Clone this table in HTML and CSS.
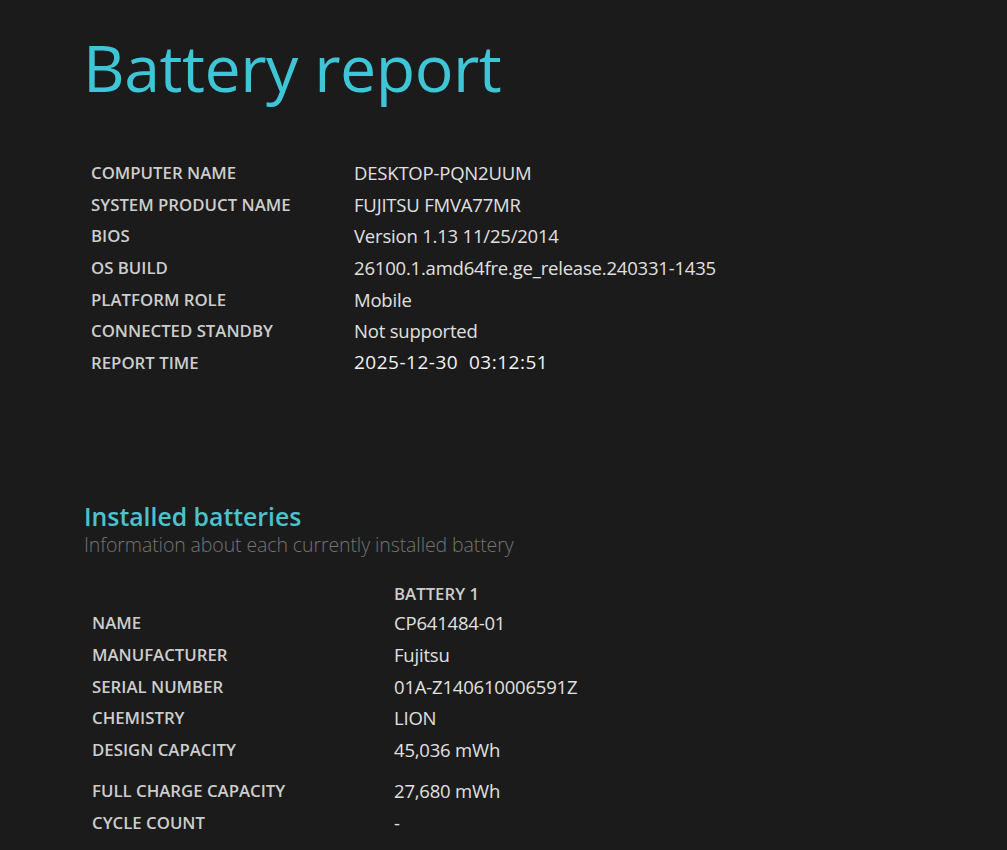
FILE: index.html
```html
<!DOCTYPE html>
<html lang="en">
<head>
<meta charset="utf-8">
<title>Battery report</title>
<link rel="stylesheet" href="styles.css">
</head>
<body>
<main class="report">
  <h1 class="title">Battery report</h1>

  <table class="info">
    <tr><td class="label">COMPUTER NAME</td><td class="value">DESKTOP-PQN2UUM</td></tr>
    <tr><td class="label">SYSTEM PRODUCT NAME</td><td class="value">FUJITSU FMVA77MR</td></tr>
    <tr><td class="label">BIOS</td><td class="value">Version 1.13 11/25/2014</td></tr>
    <tr><td class="label">OS BUILD</td><td class="value">26100.1.amd64fre.ge_release.240331-1435</td></tr>
    <tr><td class="label">PLATFORM ROLE</td><td class="value">Mobile</td></tr>
    <tr><td class="label">CONNECTED STANDBY</td><td class="value">Not supported</td></tr>
    <tr><td class="label">REPORT TIME</td><td class="value time">2025-12-30 &nbsp;03:12:51</td></tr>
  </table>

  <section class="section">
    <h2 class="section-title">Installed batteries</h2>
    <p class="section-sub">Information about each currently installed battery</p>

    <table class="batteries">
      <tr class="head"><td class="label"></td><td class="colhead">BATTERY 1</td></tr>
      <tr><td class="label">NAME</td><td class="value">CP641484-01</td></tr>
      <tr><td class="label">MANUFACTURER</td><td class="value">Fujitsu</td></tr>
      <tr><td class="label">SERIAL NUMBER</td><td class="value">01A-Z140610006591Z</td></tr>
      <tr><td class="label">CHEMISTRY</td><td class="value">LION</td></tr>
      <tr class="gap-after"><td class="label">DESIGN CAPACITY</td><td class="value">45,036 mWh</td></tr>
      <tr><td class="label">FULL CHARGE CAPACITY</td><td class="value">27,680 mWh</td></tr>
      <tr><td class="label">CYCLE COUNT</td><td class="value">-</td></tr>
    </table>
  </section>
</main>
</body>
</html>
```

FILE: styles.css
```css
html, body {
  margin: 0;
  padding: 0;
  background: #1b1b1b;
  height: 100%;
  overflow: hidden;
}

body {
  font-family: "Open Sans", "Noto Sans", sans-serif;
  color: #e2e2e2;
}

.report {
  padding: 24px 0 0 84px;
}

.title {
  margin: 0;
  font-weight: 400;
  font-size: 64.5px;
  line-height: 86px;
  color: #3fc6d6;
  letter-spacing: -0.5px;
  margin-left: -1px;
}

.info {
  margin-top: 47px;
  border-collapse: collapse;
  margin-left: 7px;
}

.info td, .batteries td {
  padding: 0;
  height: 31.6px;
  vertical-align: middle;
  white-space: nowrap;
}

.label {
  font-weight: 600;
  font-size: 16.8px;
  color: #cdcdcd;
  letter-spacing: 0;
}

.info .label {
  width: 263px;
}

.value {
  font-size: 18.5px;
  color: #e0e0e0;
  letter-spacing: -0.2px;
}

.time {
  color: #f2f2f2;
  font-weight: 500;
  font-size: 19px;
  letter-spacing: 0.5px;
}

.section {
  margin-top: 123px;
}

.section-title {
  margin: 0;
  font-weight: 600;
  font-size: 24.8px;
  line-height: 30px;
  color: #4cc2cf;
}

.section-sub {
  margin: 0;
  font-weight: 300;
  font-size: 19.5px;
  line-height: 28px;
  color: #747474;
  letter-spacing: -0.1px;
}

.batteries {
  margin-top: 21px;
  margin-left: 8px;
  border-collapse: collapse;
}

.batteries .label {
  width: 302px;
}

.batteries .head td {
  height: 27px;
}

.colhead {
  font-weight: 600;
  font-size: 16.8px;
  color: #cdcdcd;
}

.batteries .gap-after td {
  height: 31.6px;
  padding-bottom: 10px;
}
```
